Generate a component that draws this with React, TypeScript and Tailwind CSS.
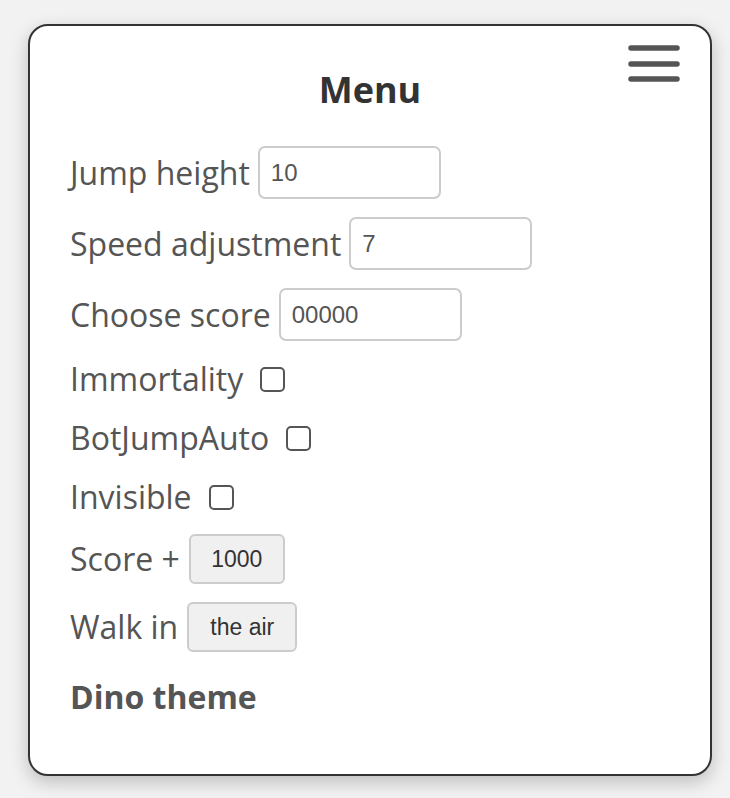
import React from "react";

function Hamburger() {
  return (
    <svg width="52" height="40" viewBox="0 0 52 40" className="absolute right-[30px] top-[19px]">
      <line x1="3" y1="3" x2="49" y2="3" stroke="#555" strokeWidth="5.5" strokeLinecap="round" />
      <line x1="3" y1="19" x2="49" y2="19" stroke="#555" strokeWidth="5.5" strokeLinecap="round" />
      <line x1="3" y1="34" x2="49" y2="34" stroke="#555" strokeWidth="5.5" strokeLinecap="round" />
    </svg>
  );
}

function InputRow({ label, value }: { label: string; value: string }) {
  return (
    <div className="flex items-center h-[53px]">
      <span className="mr-[8px]">{label}</span>
      <div className="w-[183px] h-[53px] border-2 border-[#cccccc] rounded-[7px] flex items-center pl-[11px] text-[24px] text-[#555] font-['Liberation_Sans',Arial,sans-serif]">
        {value}
      </div>
    </div>
  );
}

function CheckRow({ label }: { label: string }) {
  return (
    <div className="flex items-center h-[42px]">
      <span className="mr-[17px]">{label}</span>
      <div className="w-[25px] h-[25px] border-2 border-[#555] rounded-[5px] bg-white" />
    </div>
  );
}

function ButtonRow({ label, text, w }: { label: string; text: string; w: string }) {
  return (
    <div className="flex items-center h-[50px]">
      <span className="mr-[9px]">{label}</span>
      <div
        className={`${w} h-[50px] bg-[#f0f0f0] border-2 border-[#cccccc] rounded-[6px] flex items-center justify-center text-[23px] text-[#333] font-['Liberation_Sans',Arial,sans-serif]`}
      >
        {text}
      </div>
    </div>
  );
}

export default function App() {
  return (
    <div className="w-[730px] h-[798px] bg-[#f2f2f2] pt-[24px] pl-[28px] font-['Open_Sans',sans-serif]">
      <div className="relative w-[684px] h-[752px] bg-white border-2 border-[#333] rounded-[20px] shadow-[0_6px_18px_rgba(0,0,0,0.22)] px-[40px]">
        <Hamburger />
        <div className="text-center text-[#333] font-bold text-[36px] leading-[40px] pt-[44px]">Menu</div>
        <div className="text-[#555] text-[32px] mt-[36px]">
          <div className="flex flex-col gap-[18px]">
            <InputRow label="Jump height" value="10" />
            <InputRow label="Speed adjustment" value="7" />
            <InputRow label="Choose score" value="00000" />
          </div>
          <div className="flex flex-col gap-[17px] mt-[17px]">
            <CheckRow label="Immortality" />
            <CheckRow label="BotJumpAuto" />
            <CheckRow label="Invisible" />
          </div>
          <div className="flex flex-col gap-[18px] mt-[16px]">
            <ButtonRow label="Score +" text="1000" w="w-[96px]" />
            <ButtonRow label="Walk in" text="the air" w="w-[110px]" />
          </div>
          <div className="font-bold mt-[25px] leading-[40px]">Dino theme</div>
        </div>
      </div>
    </div>
  );
}
